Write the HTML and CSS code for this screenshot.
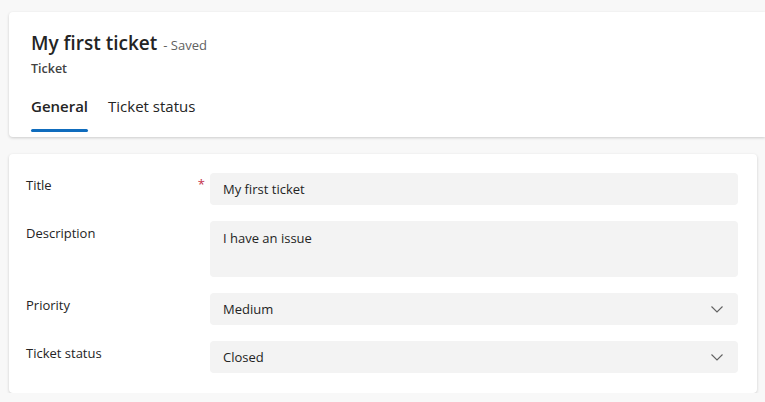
FILE: index.html
```html
<!DOCTYPE html>
<html lang="en">
  <head>
    <meta charset="UTF-8" />
    <title>My first ticket</title>
    <link rel="stylesheet" href="styles.css">
  </head>
  <body>
    <div class="header">
      <div class="title-row">
        <h1 class="title">My first ticket</h1>
        <span class="saved">- Saved</span>
      </div>
      <div class="entity">Ticket</div>
      <div class="tabs">
        <div class="tab active">General</div>
        <div class="tab">Ticket status</div>
      </div>
    </div>

    <div class="form">
      <div class="row">
        <div class="label">Title<span class="req">*</span></div>
        <div class="field">My first ticket</div>
      </div>
      <div class="row">
        <div class="label">Description</div>
        <div class="field area">I have an issue</div>
      </div>
      <div class="row">
        <div class="label">Priority</div>
        <div class="field select">
          <span>Medium</span>
          <svg class="chev" width="12" height="7" viewBox="0 0 12 7"><path d="M0.5 0.5l5.5 5.5 5.5-5.5" fill="none" stroke="#616161" stroke-width="1.1"/></svg>
        </div>
      </div>
      <div class="row">
        <div class="label">Ticket status</div>
        <div class="field select">
          <span>Closed</span>
          <svg class="chev" width="12" height="7" viewBox="0 0 12 7"><path d="M0.5 0.5l5.5 5.5 5.5-5.5" fill="none" stroke="#616161" stroke-width="1.1"/></svg>
        </div>
      </div>
    </div>
  </body>
</html>
```
FILE: styles.css
```css
body {
  margin: 0;
  padding: 12px 0 0 9px;
  background-color: #f8f8f8;
  font-family: "Open Sans", "Noto Sans", sans-serif;
  color: #242424;
  overflow: hidden;
}

.header {
  background-color: #fff;
  border-radius: 4px 0 0 4px;
  box-shadow: 0 1px 3px rgba(0, 0, 0, 0.18);
  height: 125px;
  padding: 0 0 0 22px;
  box-sizing: border-box;
}
.title-row {
  display: flex;
  align-items: baseline;
  padding-top: 17px;
}
.title {
  margin: 0;
  font-size: 19px;
  font-weight: 600;
  line-height: 28px;
}
.saved {
  margin-left: 6px;
  font-size: 13px;
  color: #616161;
}
.entity {
  font-size: 12.5px;
  font-weight: 600;
  color: #424242;
  line-height: 16px;
  margin-top: 4px;
}
.tabs {
  display: flex;
  gap: 20px;
  margin-top: 19px;
}
.tab {
  font-size: 15px;
  line-height: 20px;
  padding-bottom: 16px;
  position: relative;
}
.tab.active {
  font-weight: 600;
}
.tab.active::after {
  content: "";
  position: absolute;
  left: 0;
  right: 0;
  bottom: 0;
  height: 3px;
  border-radius: 2px;
  background-color: #0f6cbd;
}

.form {
  margin-top: 17px;
  width: 748px;
  background-color: #fff;
  border-radius: 4px;
  box-shadow: 0 1px 3px rgba(0, 0, 0, 0.18);
  padding: 19px 19px 20px 17px;
  box-sizing: border-box;
  display: flex;
  flex-direction: column;
  gap: 16px;
}
.row {
  display: grid;
  grid-template-columns: 184px 1fr;
}
.label {
  font-size: 13px;
  line-height: 20px;
  padding-top: 2px;
  position: relative;
}
.req {
  position: absolute;
  right: 5px;
  top: 1px;
  color: #c4314b;
  font-size: 13px;
}
.field {
  background-color: #f3f3f3;
  border-radius: 4px;
  height: 32px;
  padding: 0 13px;
  box-sizing: border-box;
  font-size: 13px;
  line-height: 32px;
}
.field.area {
  height: 56px;
  line-height: 20px;
  padding-top: 7px;
}
.field.select {
  display: flex;
  justify-content: space-between;
  align-items: center;
  padding-right: 15px;
}
```
